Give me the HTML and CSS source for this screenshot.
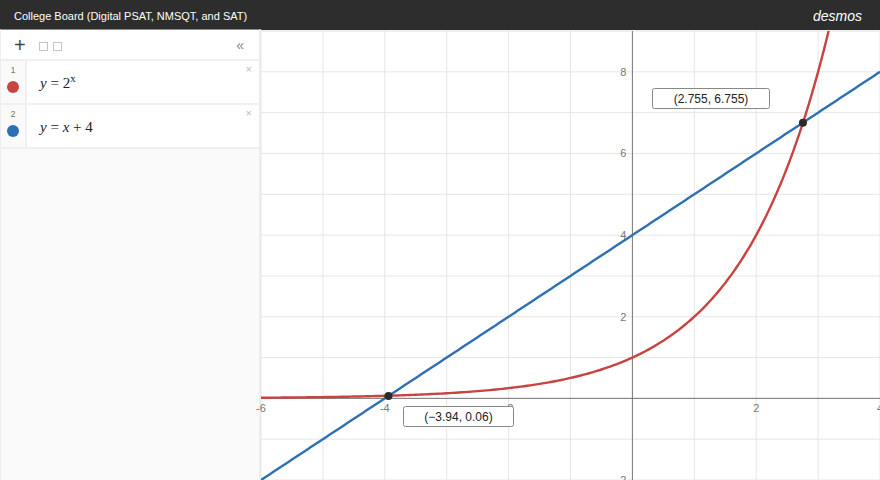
FILE: index.html
```
<!DOCTYPE html>
<html lang="en">
<head>
    <meta charset="UTF-8">
    <meta name="viewport" content="width=device-width, initial-scale=1.0">
    <title>Graphing Calculator</title>
    <link rel="stylesheet" href="styles.css">
</head>
<body>

<header>
    <span class="title">College Board (Digital PSAT, NMSQT, and SAT)</span>
    <span class="brand">desmos</span>
</header>

<main>
    <aside class="panel">
        <div class="toolbar">
            <button class="add" aria-label="Add item">+</button>
            <button class="history" aria-label="Undo"></button>
            <button class="history" aria-label="Redo"></button>
            <button class="collapse" aria-label="Hide expression list">«</button>
        </div>
        <ol class="expressions">
            <li>
                <div class="tab">
                    <span>1</span>
                    <span class="dot red"></span>
                </div>
                <div class="formula"><i>y</i> = 2<sup>x</sup></div>
                <button class="remove" aria-label="Delete expression 1">×</button>
            </li>
            <li>
                <div class="tab">
                    <span>2</span>
                    <span class="dot blue"></span>
                </div>
                <div class="formula"><i>y</i> = <i>x</i> + 4</div>
                <button class="remove" aria-label="Delete expression 2">×</button>
            </li>
        </ol>
    </aside>
    <section class="graph">
        <svg id="plot" role="img" aria-label="Graph of y = 2^x and y = x + 4"></svg>
    </section>
</main>

<script src="graph.js"></script>
</body>
</html>
```
FILE: styles.css
```
* {
    box-sizing: border-box;
}
body {
    margin: 0;
    height: 100vh;
    display: flex;
    flex-direction: column;
    overflow: hidden;
    background-color: #fff;
    color: #222;
    font-family: "Liberation Sans", Arial, sans-serif;
}
header {
    display: flex;
    align-items: center;
    justify-content: space-between;
    height: 30px;
    padding: 2px 18px 0 14px;
    background-color: #2d2d2d;
    color: #fff;
}
.title {
    font-size: 11px;
}
.brand {
    font-size: 14px;
    font-style: italic;
}
main {
    flex: 1;
    display: flex;
    min-height: 0;
}
button {
    padding: 0;
    border: none;
    background: none;
    font-family: inherit;
    cursor: pointer;
}

/* expression list */
.panel {
    width: 261px;
    flex-shrink: 0;
    margin-top: -1px;
    border: solid #eee;
    border-width: 1px 2px 0 1px;
    border-top-color: #8c8c8c;
    background-color: #fafafa;
}
.toolbar {
    display: flex;
    align-items: center;
    height: 31px;
    padding: 0 15px 0 13px;
    background-color: #fff;
    border-bottom: 2px solid #f0f0f0;
}
.add {
    margin-right: 13px;
    color: #444;
    font-size: 20px;
    line-height: 28px;
}
.history {
    width: 9px;
    height: 9px;
    margin: 4px 5px 0 0;
    border: 1px solid #c4c4cc;
}
.collapse {
    margin-left: auto;
    color: #888;
    font-size: 14px;
}
.expressions {
    margin: 0;
    padding: 0;
    list-style: none;
}
.expressions li {
    display: flex;
    height: 44px;
    background-color: #fff;
    border-bottom: 2px solid #f0f0f0;
}
.tab {
    display: flex;
    flex-direction: column;
    align-items: center;
    width: 26px;
    padding-top: 4px;
    background-color: #fafafa;
    border-right: 2px solid #f0f0f0;
    color: #777;
    font-size: 9px;
    line-height: 10px;
}
.dot {
    width: 12px;
    height: 12px;
    margin-top: 6px;
    border-radius: 50%;
}
.red {
    background-color: #c74440;
}
.blue {
    background-color: #2d70b3;
}
.formula {
    flex: 1;
    padding-left: 13px;
    font-family: "Liberation Serif", "Times New Roman", serif;
    font-size: 15px;
    line-height: 45px;
}
.formula sup {
    font-size: 11px;
    line-height: 0;
}
.remove {
    align-self: flex-start;
    margin: 2px 7px 0 0;
    color: #bbb;
    font-size: 11px;
    line-height: 12px;
}

/* graph */
.graph {
    flex: 1;
    min-width: 0;
    border-top: 1px solid #f4f4f4;
}
#plot {
    display: block;
    width: 100%;
    height: 100%;
    overflow: visible;
}
.grid {
    stroke: #e6e6e6;
}
.axis {
    stroke: #777;
}
.label {
    fill: #777;
    font-size: 11px;
}
.curve {
    fill: none;
    stroke-width: 2.4;
}
.exponential {
    stroke: #c74440;
}
.line {
    stroke: #2d70b3;
}
.point {
    fill: #2a2a2a;
}
.callout rect {
    fill: #fff;
    stroke: #888;
}
.callout text {
    fill: #222;
    font-size: 12px;
    text-anchor: middle;
}
```
FILE: graph.js
```
const plot = document.getElementById("plot");

// Visible range of the graph
const view = { left: -6, right: 4, bottom: -2, top: 9 };

const curves = [
    { name: "exponential", f: x => Math.pow(2, x) },
    { name: "line", f: x => x + 4 }
];

// dx and dy place the label box relative to its point
const points = [
    { x: 2.755, y: 6.755, text: "(2.755, 6.755)", dx: -151, dy: -35, width: 117 },
    { x: -3.94, y: 0.06, text: "(−3.94, 0.06)", dx: 14, dy: 10, width: 110 }
];

function draw() {
    const width = plot.clientWidth;
    const height = plot.clientHeight;
    const toX = x => (x - view.left) / (view.right - view.left) * width;
    const toY = y => (view.top - y) / (view.top - view.bottom) * height;
    const line = (x1, y1, x2, y2, name) =>
        `<line class="${name}" x1="${x1}" y1="${y1}" x2="${x2}" y2="${y2}"/>`;

    let grid = "";
    let labels = "";

    for (let x = view.left; x <= view.right; x++) {
        grid += line(toX(x), 0, toX(x), height, "grid");
        if (x !== 0 && x % 2 === 0) {
            labels += `<text class="label" x="${toX(x)}" y="${toY(0) + 14}" text-anchor="middle">${x}</text>`;
        }
    }
    for (let y = view.bottom; y <= view.top; y++) {
        grid += line(0, toY(y), width, toY(y), "grid");
        if (y !== 0 && y % 2 === 0) {
            labels += `<text class="label" x="${toX(0) - 6}" y="${toY(y) + 4}" text-anchor="end">${y}</text>`;
        }
    }

    const axes = line(0, toY(0), width, toY(0), "axis") + line(toX(0), 0, toX(0), height, "axis");

    let paths = "";
    curves.forEach(curve => {
        const steps = [];
        for (let i = 0; i <= 200; i++) {
            const x = view.left + (view.right - view.left) * i / 200;
            steps.push(`${toX(x).toFixed(2)},${toY(curve.f(x)).toFixed(2)}`);
        }
        paths += `<polyline class="curve ${curve.name}" points="${steps.join(" ")}"/>`;
    });

    let callouts = "";
    points.forEach(p => {
        const x = toX(p.x);
        const y = toY(p.y);
        const boxX = Math.round(x + p.dx) + 0.5;
        const boxY = Math.round(y + p.dy) + 0.5;
        callouts += `<circle class="point" cx="${x}" cy="${y}" r="4"/>
            <g class="callout">
                <rect x="${boxX}" y="${boxY}" width="${p.width}" height="20" rx="2"/>
                <text x="${boxX + p.width / 2}" y="${boxY + 14}">${p.text}</text>
            </g>`;
    });

    plot.innerHTML = `
        <clipPath id="area"><rect width="${width}" height="${height}"/></clipPath>
        ${grid}${axes}${labels}
        <g clip-path="url(#area)">${paths}</g>
        ${callouts}`;
}

draw();
window.addEventListener("resize", draw);
```
